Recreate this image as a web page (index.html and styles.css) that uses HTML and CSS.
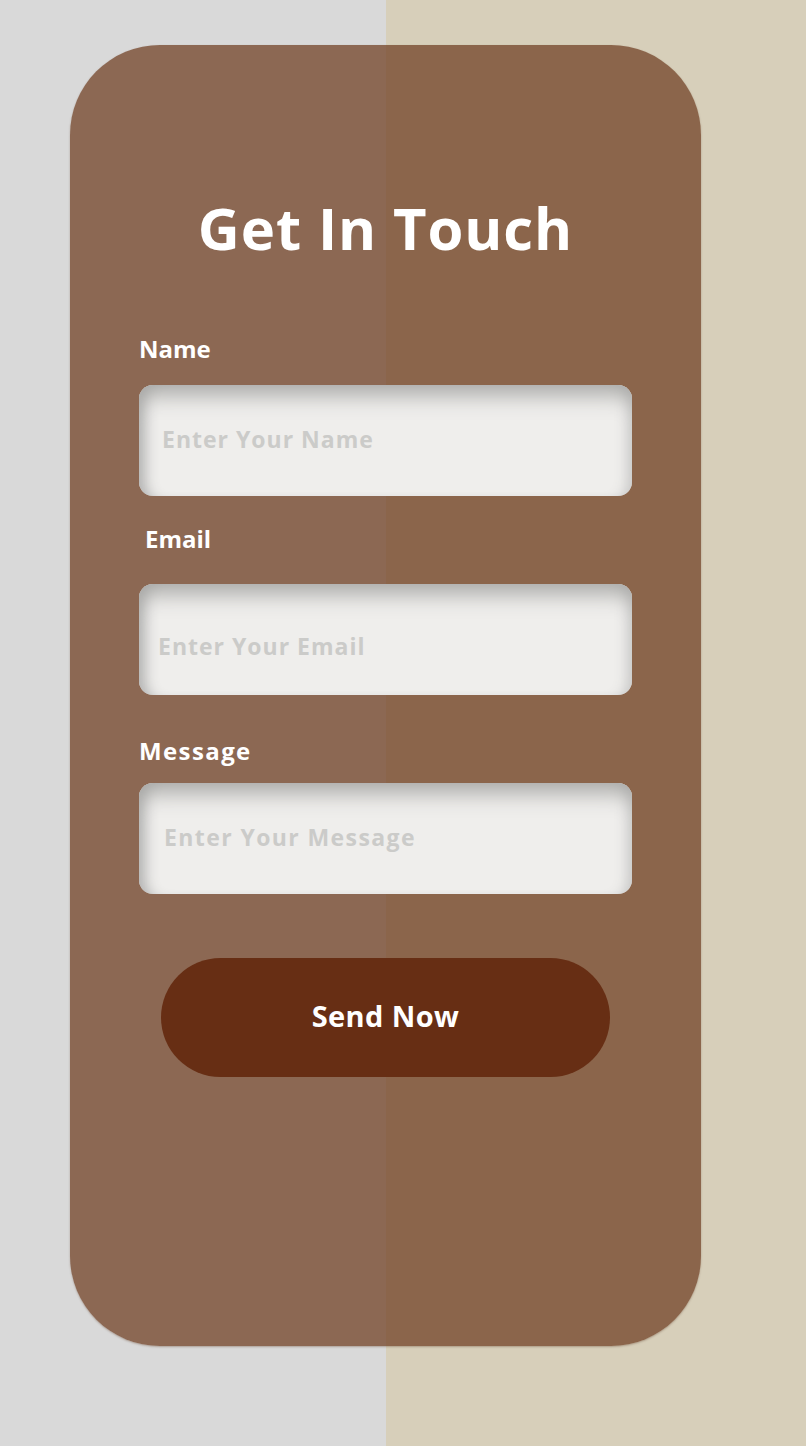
FILE: index.html
```html
<!DOCTYPE html>
<html lang="en">
<head>
  <meta charset="UTF-8">
  <title>Get In Touch</title>
  <link rel="stylesheet" href="styles.css">
</head>
<body>

<form class="contact-card">
  <h1 class="contact-title">Get In Touch</h1>

  <label class="field-label label-name" for="name">Name</label>
  <input class="field-input input-name" type="text" id="name" placeholder="Enter Your Name">

  <label class="field-label label-email" for="email">Email</label>
  <input class="field-input input-email" type="text" id="email" placeholder="Enter Your Email">

  <label class="field-label label-message" for="message">Message</label>
  <textarea class="field-input input-message" id="message" placeholder="Enter Your Message"></textarea>

  <button class="send-btn" type="button">Send Now</button>
</form>

</body>
</html>
```

FILE: styles.css
```css
html, body {
  height: 100%;
}
body {
  margin: 0;
  overflow: hidden;
  font-family: "Open Sans", "Liberation Sans", sans-serif;
  background-image: linear-gradient(to right, #d9d9d9 386px, #d7cfba 386px);
}
.contact-card {
  box-sizing: border-box;
  display: flex;
  flex-direction: column;
  width: 631px;
  height: 1301px;
  margin: 45px 0 0 70px;
  padding: 0 69px;
  border-radius: 90px;
  background-color: rgba(113, 65, 38, 0.75);
  box-shadow: 0 1px 2px rgba(120, 90, 70, 0.45);
}
.contact-title {
  margin: 146px 0 0;
  height: 74px;
  line-height: 74px;
  text-align: center;
  font-size: 58px;
  font-weight: 700;
  letter-spacing: 0.9px;
  color: white;
  white-space: nowrap;
}
.field-label {
  display: block;
  height: 28px;
  line-height: 28px;
  font-size: 24px;
  font-weight: 700;
  color: white;
}
.label-name {
  margin-top: 70px;
}
.label-email {
  margin-top: 29px;
  margin-left: 6px;
}
.label-message {
  margin-top: 42px;
  letter-spacing: 1.4px;
}
.field-input {
  box-sizing: border-box;
  display: block;
  width: 493px;
  height: 111px;
  border: none;
  outline: none;
  resize: none;
  border-radius: 14px;
  font-family: inherit;
  font-size: 23px;
  font-weight: 700;
  letter-spacing: 1px;
  background-color: #efeeec;
  box-shadow: inset 0 24px 22px -14px #a9a9a7, inset 16px 0 14px -10px #b2b2b1, inset -14px 0 14px -10px #c8c8c7;
}
.field-input::placeholder {
  color: #cbcbc9;
  opacity: 1;
}
.input-name {
  margin-top: 22px;
  padding: 0 23px 4px;
}
.input-email {
  margin-top: 31px;
  padding: 12px 19px 0;
}
.input-message {
  margin-top: 18px;
  padding: 40px 25px 0;
  line-height: 28px;
  letter-spacing: 1.4px;
}
.send-btn {
  display: block;
  width: 449px;
  height: 119px;
  margin: 64px 0 0 22px;
  padding: 0 0 4px;
  border: none;
  border-radius: 60px;
  background-color: #672e14;
  color: white;
  font-family: inherit;
  font-size: 29px;
  font-weight: 700;
  letter-spacing: 0.4px;
  cursor: pointer;
}
```
